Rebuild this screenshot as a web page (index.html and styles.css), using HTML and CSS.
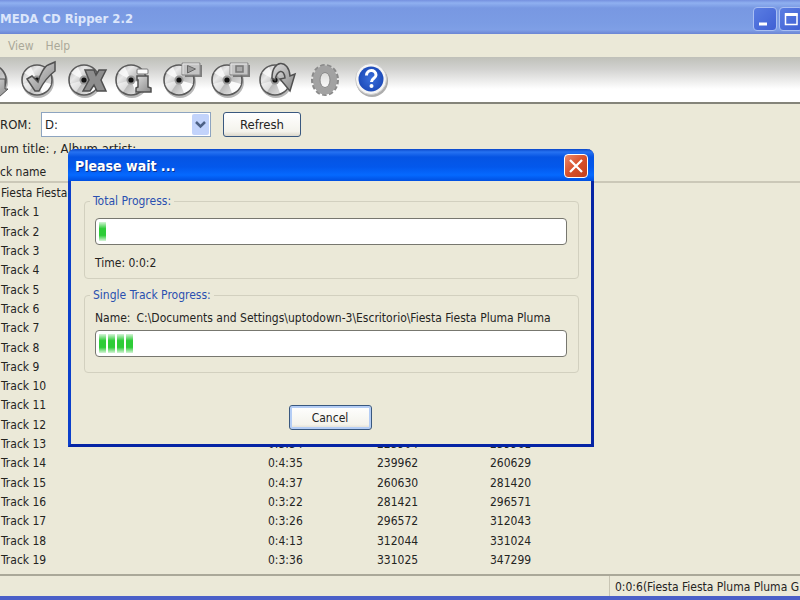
FILE: index.html
```html
<!DOCTYPE html>
<html lang="en">
<head>
<meta charset="utf-8">
<title>MEDA CD Ripper 2.2</title>
<link rel="stylesheet" href="styles.css">
</head>
<body>
<svg class="defs" width="0" height="0" aria-hidden="true">
  <defs>
    <linearGradient id="metal" x1="0" y1="0" x2="1" y2="1">
      <stop offset="0" stop-color="#aaa"/><stop offset=".3" stop-color="#e8e8e8"/><stop offset=".55" stop-color="#bbb"/><stop offset="1" stop-color="#fafafa"/>
    </linearGradient>
    <linearGradient id="steel" x1="0" y1="0" x2="1" y2="1">
      <stop offset="0" stop-color="#dcdcdc"/><stop offset="1" stop-color="#888"/>
    </linearGradient>
    <radialGradient id="blue"><stop offset="0" stop-color="#3b6fdc"/><stop offset="1" stop-color="#1e4cba"/></radialGradient>
    <g id="disc">
      <circle cx="21" cy="25" r="16" fill="#888" opacity=".6"/>
      <circle cx="20" cy="23" r="15" fill="url(#metal)" stroke="#5a5a5a" stroke-width="1.6"/>
      <path d="M20 23 7 16A15 15 0 0 1 14 10Z" fill="#fff" opacity=".7"/>
      <path d="M20 23 34 27A14 14 0 0 1 25 36Z" fill="#fff" opacity=".9"/>
      <path d="M20 23 6 27A14 14 0 0 0 12 35Z" fill="#fff" opacity=".5"/>
      <circle cx="20" cy="23" r="4.500" fill="#999"/>
      <circle cx="20" cy="23" r="2.600" fill="#111"/>
    </g>
    <g id="plate">
      <path d="M26 8h17v12H26Z" fill="#666" opacity=".8"/>
      <path d="M23 6h18v12H23Z" fill="#c4c4c4" stroke="#8a8a8a"/>
      <path d="M24 17V7h16" fill="none" stroke="#e6e6e6"/>
    </g>
  </defs>
</svg>
<main class="window">
  <header class="titlebar">
    <h1>MEDA CD Ripper 2.2</h1>
    <div class="caption-buttons">
      <button type="button" aria-label="Minimize"><svg width="20" height="20"><path d="M4 15h8" stroke="#fff" stroke-width="3"/></svg></button>
      <button type="button" aria-label="Maximize"><svg width="20" height="20"><path d="M4.500 5h11.500v10.500H4.500Z" fill="none" stroke="#fff" stroke-width="1.500"/><path d="M4 5.500h12.500" stroke="#fff" stroke-width="3"/></svg></button>
    </div>
  </header>
  <nav class="menubar"><button type="button">View</button><button type="button">Help</button></nav>
  <div class="toolbar">
    <button type="button" aria-label="Rip"><svg width="48" height="45"><use href="#disc" x="4"/><path d="M26 22h12v10h3l-9 8-9-8h3Z" fill="url(#steel)" stroke="#555"/></svg></button>
    <button type="button" aria-label="Select"><svg width="48" height="45"><use href="#disc" x="2"/><path d="M12 22 17 19 23 25C25 17 30 9 33 8L40 5 40 14C33 19 27 28 24 34L20 34Z" fill="url(#steel)" stroke="#505050" stroke-width="1.500"/></svg></button>
    <button type="button" aria-label="Clear"><svg width="48" height="45"><use href="#disc" x="1"/><path d="M22 13h9l2 5 3-5h7l-5 10 5 11h-9l-3-6-4 6h-7l6-11Z" fill="#8e8e8e" stroke="#4f4f4f" stroke-width="1.500"/></svg></button>
    <button type="button" aria-label="Information"><svg width="48" height="45"><use href="#disc"/><rect x="26" y="12" width="11" height="5" rx="1" fill="#fafafa" stroke="#777"/><path d="M26 19h11v11l3 1v4H25v-4l2-1v-7h-1Z" fill="url(#steel)" stroke="#505050" stroke-width="1.500"/></svg></button>
    <button type="button" aria-label="Play"><svg width="48" height="45"><use href="#disc"/><use href="#plate"/><path d="M28.500 8.500v7.500l8-4Z" fill="#999" stroke="#666"/></svg></button>
    <button type="button" aria-label="Stop"><svg width="48" height="45"><use href="#disc"/><use href="#plate"/><path d="M29 9h7v6h-7Z" fill="#aaa" stroke="#777" stroke-width="1.500"/></svg></button>
    <button type="button" aria-label="Reload"><svg width="48" height="45"><use href="#disc"/><path d="M17 21C17 2 34 2 35 19L40 17 35 34 25 22 30 21C29 11 22 13 20 23Z" fill="url(#steel)" stroke="#505050" stroke-width="1.500"/></svg></button>
    <button type="button" aria-label="Settings"><svg width="48" height="45"><ellipse cx="22" cy="23" rx="11" ry="13" fill="none" stroke="#8a8a8a" stroke-width="6" stroke-dasharray="3.800 2"/><ellipse cx="22" cy="23" rx="8.500" ry="11" fill="none" stroke="#a2a2a2" stroke-width="7"/><ellipse cx="22" cy="23" rx="5" ry="7.500" fill="none" stroke="#888"/></svg></button>
    <button type="button" aria-label="Help"><svg width="48" height="45"><circle cx="21" cy="24" r="16" fill="#777" opacity=".6"/><circle cx="20" cy="22" r="15.500" fill="#f5f5f5" stroke="#ccc"/><circle cx="20" cy="22" r="12.500" fill="url(#blue)"/><path d="M15.500 18.500C15.500 12 25 12 25 18 25 21.500 20.500 21 20.500 25" fill="none" stroke="#fff" stroke-width="3"/><circle cx="20.500" cy="29" r="2" fill="#fff"/></svg></button>
  </div>
  <div class="drive">
    <label for="drive">ROM:</label>
    <span class="combo">
      <select id="drive"><option>D:</option></select>
      <svg width="17" height="21" aria-hidden="true"><rect width="17" height="21" rx="2" fill="#c2d3fb"/><path d="m4 8 4.500 4.500L13 8" fill="none" stroke="#4d6185" stroke-width="2.500"/></svg>
    </span>
    <button type="button" class="button refresh">Refresh</button>
  </div>
  <p class="album">um title: , Album artist:</p>
  <div class="list">
    <table>
      <colgroup><col class="name"><col class="length"><col class="start"><col></colgroup>
      <thead><tr><th>ck name</th><th></th><th></th><th></th></tr></thead>
      <tbody>
        <tr><td>Fiesta Fiesta</td><td></td><td></td><td></td></tr>
        <tr><td>Track 1</td><td></td><td></td><td></td></tr>
        <tr><td>Track 2</td><td></td><td></td><td></td></tr>
        <tr><td>Track 3</td><td></td><td></td><td></td></tr>
        <tr><td>Track 4</td><td></td><td></td><td></td></tr>
        <tr><td>Track 5</td><td></td><td></td><td></td></tr>
        <tr><td>Track 6</td><td></td><td></td><td></td></tr>
        <tr><td>Track 7</td><td></td><td></td><td></td></tr>
        <tr><td>Track 8</td><td></td><td></td><td></td></tr>
        <tr><td>Track 9</td><td></td><td></td><td></td></tr>
        <tr><td>Track 10</td><td></td><td></td><td></td></tr>
        <tr><td>Track 11</td><td></td><td></td><td></td></tr>
        <tr><td>Track 12</td><td></td><td></td><td></td></tr>
        <tr><td>Track 13</td><td>0:3:34</td><td>223904</td><td>239961</td></tr>
        <tr><td>Track 14</td><td>0:4:35</td><td>239962</td><td>260629</td></tr>
        <tr><td>Track 15</td><td>0:4:37</td><td>260630</td><td>281420</td></tr>
        <tr><td>Track 16</td><td>0:3:22</td><td>281421</td><td>296571</td></tr>
        <tr><td>Track 17</td><td>0:3:26</td><td>296572</td><td>312043</td></tr>
        <tr><td>Track 18</td><td>0:4:13</td><td>312044</td><td>331024</td></tr>
        <tr><td>Track 19</td><td>0:3:36</td><td>331025</td><td>347299</td></tr>
      </tbody>
    </table>
  </div>
  <footer class="status"><span>0:0:6(Fiesta Fiesta Pluma Pluma G</span></footer>
</main>
<section class="dialog" role="dialog" aria-labelledby="dialog-title">
  <header>
    <h2 id="dialog-title">Please wait ...</h2>
    <button type="button" aria-label="Close"><svg width="22" height="22"><path d="m5 5 12 12M17 5 5 17" stroke="#fff" stroke-width="2.300"/></svg></button>
  </header>
  <div class="body">
    <fieldset>
      <legend>Total Progress:</legend>
      <progress class="total" aria-label="Total progress" value="8" max="464"></progress>
      <p>Time: 0:0:2</p>
    </fieldset>
    <fieldset>
      <legend>Single Track Progress:</legend>
      <p class="path"><span>Name:</span><span>C:\Documents and Settings\uptodown-3\Escritorio\Fiesta Fiesta Pluma Pluma</span></p>
      <progress aria-label="Track progress" value="35" max="464"></progress>
    </fieldset>
    <button type="button" class="button cancel">Cancel</button>
  </div>
</section>
</body>
</html>
```
FILE: styles.css
```css
* { box-sizing: border-box; }
body {
  margin: 0;
  height: 100vh;
  overflow: hidden;
  background: #ebe9d8;
  color: #24241f;
  font: 12px/16px "DejaVu Sans Condensed", "Noto Sans", sans-serif;
}
button, select { font: inherit; color: inherit; }
h1, h2, p { margin: 0; }
.defs { position: absolute; }
.window {
  display: flex;
  flex-direction: column;
  height: 100%;
  border-bottom: 4px solid #4a5fc8;
}
.titlebar {
  display: flex;
  align-items: center;
  justify-content: space-between;
  height: 34px;
  flex: none;
  padding-top: 4px;
  background: linear-gradient(#7590df 0, #8fb0f0 3px, #7898e2 8px, #7b9ce4 24px, #7f9fe6 30px, #6b85d4 34px);
}
.titlebar h1 { color: #dce6fb; font-size: 13px; white-space: nowrap; }
.caption-buttons { display: flex; gap: 2px; margin-right: -3px; }
.caption-buttons button {
  width: 24px;
  height: 24px;
  padding: 1px;
  border: 1px solid #a9bff3;
  border-radius: 4px;
  background: linear-gradient(135deg, #5a7de2, #3f60d4);
}
.caption-buttons svg, .dialog header svg { display: block; }
.menubar { display: flex; gap: 12px; height: 23px; flex: none; padding: 2px 8px; }
.menubar button { padding: 0; border: 0; background: none; color: #aaa899; }
.toolbar {
  display: flex;
  flex: none;
  height: 47px;
  border-bottom: 2px solid #84847a;
  background: linear-gradient(#bfc0b9, #d2d2d0 12px, #fff 32px);
}
.toolbar button { flex: none; width: 48px; height: 45px; padding: 0; border: 0; background: none; }
.toolbar button:first-child { margin-left: -33px; }
.toolbar svg { display: block; }
.drive { display: flex; align-items: center; flex: none; padding-top: 8px; }
.drive label { width: 41px; font-size: 13px; }
.combo { position: relative; width: 170px; margin-right: 12px; }
.combo select {
  display: block;
  appearance: none;
  width: 100%;
  height: 25px;
  padding: 0 3px;
  border: 1px solid #8da4c0;
  border-radius: 0;
  background: #fff;
  font-size: 13px;
}
.combo svg { position: absolute; right: 2px; top: 2px; pointer-events: none; }
.button {
  height: 25px;
  padding: 0;
  border: 1px solid #39587f;
  border-radius: 3px;
  background: linear-gradient(#fff, #f4f3ec 80%, #dcd8cb);
}
.refresh { width: 78px; font-size: 13px; }
.album { flex: none; height: 25px; padding-top: 4px; font-size: 13px; }
.list { flex: 1; min-height: 0; padding-bottom: 4px; }
table { width: 100%; height: 100%; border-collapse: collapse; table-layout: fixed; }
th, td { padding: 0; text-align: left; font-weight: normal; white-space: nowrap; }
td:first-child { padding-left: 1px; }
thead tr { height: 20px; }
th { border-bottom: 2px solid #cbc8b8; }
.name { width: 268px; }
.length { width: 109px; }
.start { width: 113px; }
.status {
  display: flex;
  justify-content: flex-end;
  flex: none;
  height: 22px;
  border-top: 2px solid #aaa899;
  overflow: hidden;
}
.status span { width: 191px; padding: 3px 0 0 5px; border-left: 1px solid #c8c5b4; white-space: nowrap; }
.dialog {
  position: absolute;
  left: 68px;
  top: 149px;
  width: 526px;
  border: 3px solid #0b3fcb;
  border-top: 0;
  border-right-color: #0524a5;
  border-bottom-color: #0524a5;
  border-radius: 7px 7px 0 0;
  background: #ebe9d8;
}
.dialog header {
  display: flex;
  align-items: center;
  justify-content: space-between;
  height: 32px;
  margin: 0 -3px;
  padding: 2px 6px 0 7px;
  border-radius: 7px 7px 0 0;
  background: linear-gradient(#0a47c9 0, #2672f2 3px, #0554e3 8px, #0358ec 18px, #0569ff 26px, #004fe0 32px);
}
.dialog h2 { color: #fff; font-size: 14px; text-shadow: 1px 1px #0a318f; }
.dialog header button {
  width: 24px;
  height: 24px;
  padding: 0;
  border: 1px solid #fff;
  border-radius: 4px;
  background: linear-gradient(135deg, #ea8a6c, #d8502b 50%, #c2401c);
}
.body { display: flex; flex-direction: column; padding: 12px 12px 14px 13px; }
fieldset {
  min-width: 0;
  height: 86px;
  margin: 0 0 8px;
  padding: 0 11px 0 10px;
  border: 1px solid #d2d0bf;
  border-radius: 4px;
}
legend { margin-left: -5px; padding: 0 3px; color: #2a50b0; }
fieldset p { margin-top: 10px; }
fieldset .path { display: flex; gap: 6px; margin: 7px 0 4px; white-space: nowrap; }
progress {
  display: block;
  appearance: none;
  width: 100%;
  height: 27px;
  padding: 3px;
  border: 1px solid #77776f;
  border-radius: 4px;
  background: #fff;
}
progress.total { margin-top: 9px; }
::-webkit-progress-bar { background: #fff; }
::-webkit-progress-value {
  background:
    linear-gradient(#fffc, #fff0 35%, #fff0 70%, #fffc),
    repeating-linear-gradient(90deg, #2dcc37 0, #2dcc37 7px, #fff 7px, #fff 9px);
}
.cancel { align-self: center; width: 83px; margin: 24px 3px 0 0; box-shadow: inset 0 0 0 2px #b4cdf5; }
```
